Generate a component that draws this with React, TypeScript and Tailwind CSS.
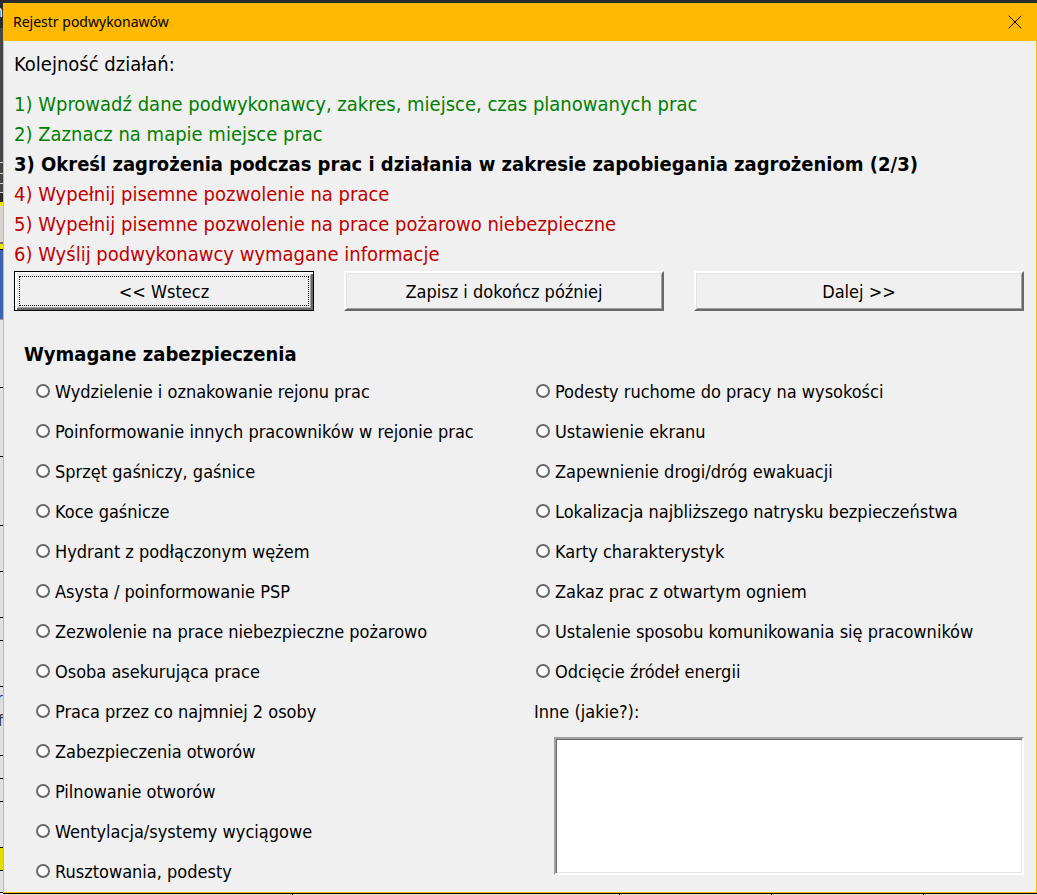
import { X } from "lucide-react";

const BASE = "font-['DejaVu_Sans_Condensed','DejaVu_Sans',sans-serif]";

const backdropCells = [
  { style: "h-7 bg-[#2b2b2b] text-white", text: "m" },
  { style: "h-[134px] bg-[#464646]" },
  { style: "h-[11px] border-t border-[#d0d0d0] bg-[#464646]" },
  { style: "h-[10px] border-t border-[#d0d0d0] bg-[#464646]" },
  { style: "h-[9px] border-t border-[#d0d0d0] bg-[#464646]" },
  { style: "h-[10px] border-t border-[#d0d0d0] bg-[#2b2b2b]" },
  { style: "h-1 bg-[#ece600]" },
  { style: "h-[36px] bg-[#d6d3ce]" },
  { style: "h-[2px] bg-[#707070]" },
  { style: "h-[5px] bg-[#ece600]" },
  { style: "h-[70px] border-t border-black bg-[#3b64ad]" },
  { style: "h-[68px] border-t border-[#999999] bg-[#e4e4e4]" },
  { style: "h-[69px] border-t border-black bg-[#e0e0e0]" },
  { style: "h-[69px] border-t border-black bg-[#e0e0e0]" },
  { style: "h-[46px] border-t border-black bg-[#e0e0e0]" },
  { style: "h-[46px] border-t border-black bg-[#e0e0e0]" },
  { style: "h-[23px] border-t border-black bg-[#e0e0e0]" },
  { style: "h-[46px] border-t border-black bg-[#e0e0e0]" },
  { style: "h-[23px] border-t border-black bg-[#e0e0e0] text-[#1f3f77]", text: "r" },
  { style: "h-[46px] bg-[#e0e0e0] text-[#333333]", text: "f" },
  { style: "h-[23px] border-t border-black bg-[#e0e0e0]" },
  { style: "h-[23px] border-t border-black bg-[#e0e0e0]" },
  { style: "h-[46px] border-t border-black bg-[#e0e0e0]" },
  { style: "h-[23px] border-t border-black bg-[#dede00]" },
  { style: "h-[22px] border-t border-black bg-[#e0e0e0]" },
  { style: "h-[2px] border-t border-black bg-[#e0e0e0]" },
];

const steps = [
  { text: "1) Wprowadź dane podwykonawcy, zakres, miejsce, czas planowanych prac", style: "text-[#008000]" },
  { text: "2) Zaznacz na mapie miejsce prac", style: "text-[#008000]" },
  { text: "3) Określ zagrożenia podczas prac i działania w zakresie zapobiegania zagrożeniom (2/3)", style: "font-bold text-black" },
  { text: "4) Wypełnij pisemne pozwolenie na prace", style: "text-[#c00000]" },
  { text: "5) Wypełnij pisemne pozwolenie na prace pożarowo niebezpieczne", style: "text-[#c00000]" },
  { text: "6) Wyślij podwykonawcy wymagane informacje", style: "text-[#c00000]" },
];

const leftOptions = [
  "Wydzielenie i oznakowanie rejonu prac",
  "Poinformowanie innych pracowników w rejonie prac",
  "Sprzęt gaśniczy, gaśnice",
  "Koce gaśnicze",
  "Hydrant z podłączonym wężem",
  "Asysta / poinformowanie PSP",
  "Zezwolenie na prace niebezpieczne pożarowo",
  "Osoba asekurująca prace",
  "Praca przez co najmniej 2 osoby",
  "Zabezpieczenia otworów",
  "Pilnowanie otworów",
  "Wentylacja/systemy wyciągowe",
  "Rusztowania, podesty",
];

const rightOptions = [
  "Podesty ruchome do pracy na wysokości",
  "Ustawienie ekranu",
  "Zapewnienie drogi/dróg ewakuacji",
  "Lokalizacja najbliższego natrysku bezpieczeństwa",
  "Karty charakterystyk",
  "Zakaz prac z otwartym ogniem",
  "Ustalenie sposobu komunikowania się pracowników",
  "Odcięcie źródeł energii",
];

function Option({ text }: { text: string }) {
  return (
    <label className="flex h-10 items-center gap-[5px] pl-[2px] whitespace-nowrap">
      <input
        type="radio"
        name={text}
        className="size-[14px] shrink-0 appearance-none rounded-full border-2 border-[#696969] bg-white checked:border-4"
      />
      <span className="pt-[2px]">{text}</span>
    </label>
  );
}

function Bevel({ text }: { text: string }) {
  return (
    <button
      type="button"
      className="h-10 border-2 border-t-white border-l-white border-r-[#696969] border-b-[#696969] bg-[#f0f0f0] pt-[2px] shadow-[inset_1px_1px_0_#e3e3e3,inset_-1px_-1px_0_#a0a0a0]"
    >
      {text}
    </button>
  );
}

export default function App() {
  return (
    <div className={`flex min-h-screen bg-[#2b2b2b] text-black ${BASE}`}>
      <div className="flex w-[3px] shrink-0 flex-col overflow-hidden bg-[#e0e0e0]" aria-hidden="true">
        {backdropCells.map((cell, i) => (
          <div key={i} className={`flex shrink-0 justify-end text-[16px] leading-6 ${cell.style}`}>
            {cell.text}
          </div>
        ))}
      </div>

      <div className="flex min-w-0 grow flex-col pt-[3px]">
        <main className="flex grow flex-col border-x border-b border-[#ffb900] bg-[#f0f0f0]">
          <header className="flex h-[38px] items-center justify-between bg-[#ffb900] pr-[12px] pl-[9px]">
            <h1 className="font-['Noto_Sans',sans-serif] text-[14px] leading-5">Rejestr podwykonawów</h1>
            <button type="button" aria-label="Zamknij" className="flex size-[18px] items-center justify-center">
              <X className="size-6 shrink-0" strokeWidth={1} />
            </button>
          </header>

          <div className="px-[10px] pt-2 text-[20px] leading-[30px]">
            <p className="mb-[10px]">Kolejność działań:</p>
            <ol>
              {steps.map((s) => (
                <li key={s.text} className={`whitespace-nowrap ${s.style}`}>
                  {s.text}
                </li>
              ))}
            </ol>
          </div>

          <div className="mt-[2px] grid grid-cols-[300fr_320fr_330fr] gap-[30px] pr-[12px] pl-[10px] text-[18px] leading-6">
            <button
              type="button"
              className="h-10 border border-black bg-[#f0f0f0] p-1 shadow-[inset_2px_2px_0_#ffffff,inset_-2px_-2px_0_#696969,inset_3px_3px_0_#e3e3e3,inset_-3px_-3px_0_#a0a0a0]"
            >
              <span className="flex h-full items-center justify-center border border-dotted border-black pt-[2px]">
                &lt;&lt; Wstecz
              </span>
            </button>
            <Bevel text="Zapisz i dokończ później" />
            <Bevel text="Dalej >>" />
          </div>

          <h2 className="mt-7 px-5 text-[20px] leading-[30px] font-bold">Wymagane zabezpieczenia</h2>

          <div className="mt-[2px] grid grid-cols-[500fr_490fr] pr-[12px] pl-[30px] text-[18px] leading-6">
            <div>
              {leftOptions.map((o) => (
                <Option key={o} text={o} />
              ))}
            </div>
            <div className="flex flex-col">
              {rightOptions.map((o) => (
                <Option key={o} text={o} />
              ))}
              <label htmlFor="other" className="flex h-10 items-center pt-[2px]">
                Inne (jakie?):
              </label>
              <textarea
                id="other"
                className="mt-[6px] ml-5 h-[138px] resize-none border-2 border-t-[#a0a0a0] border-l-[#a0a0a0] border-r-white border-b-white bg-white p-1 shadow-[inset_1px_1px_0_#696969,inset_-1px_-1px_0_#e3e3e3] outline-none"
              />
            </div>
          </div>
        </main>
        <div
          className="grid h-[2px] grid-cols-[290fr_327fr_152fr_152fr_113fr] divide-x divide-black border-t border-black bg-[#e0e0e0]"
          aria-hidden="true"
        >
          <div />
          <div />
          <div />
          <div />
          <div />
        </div>
      </div>
    </div>
  );
}
